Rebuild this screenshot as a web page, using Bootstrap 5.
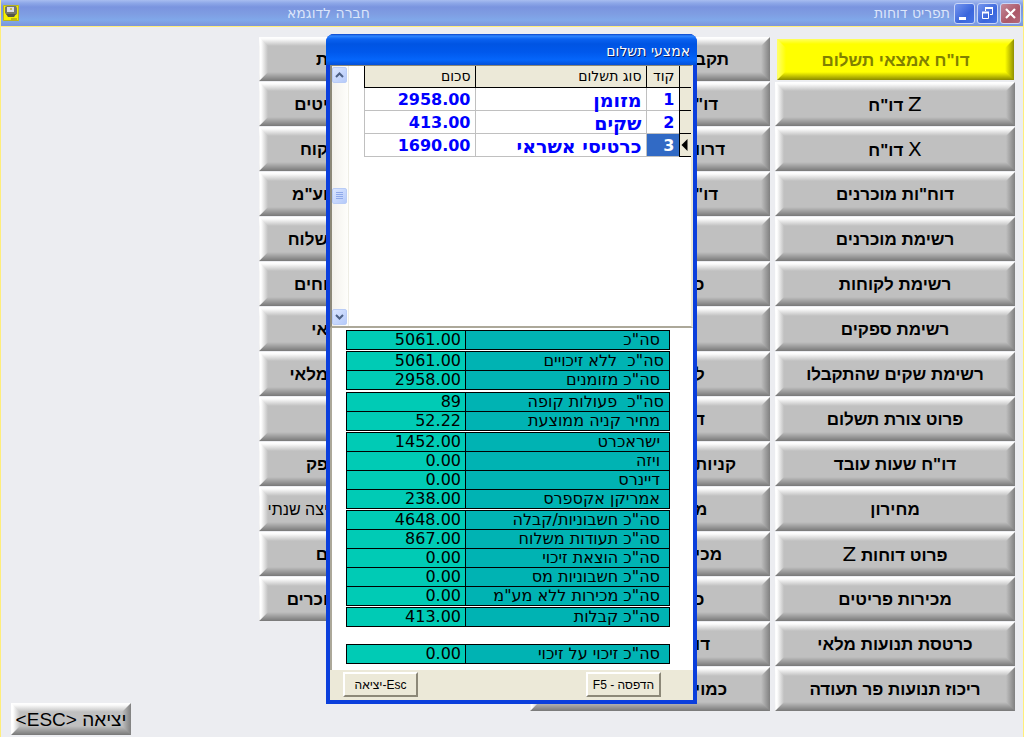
<!DOCTYPE html>
<html lang="he" dir="rtl">
<head>
<meta charset="utf-8">
<meta name="viewport" content="width=device-width, initial-scale=1">
<title>תפריט דוחות</title>
<link href="https://cdn.jsdelivr.net/npm/bootstrap@5.3.0/dist/css/bootstrap.min.css" rel="stylesheet">
<style>
  body { font-family: "DejaVu Sans", sans-serif; background: #ecedf1; color: #000; }
  .app { border-left: 1px solid #ffee7a; border-right: 1px solid #ffee7a; }
  .app-bar { height: 27px; padding: 0 2px; border-bottom: 1px solid #ffee7a; font-size: 14px; color: #dbe5fa;
    background: linear-gradient(#a8bdf0 0, #8ea8e8 3px, #7a94df 7px, #7f9de2 14px, #80a8ea 20px, #7d9fe2 23px, #7c94dc 26px); }
  .win-btns { gap: 2px; }
  .win-btn { width: 21px; height: 21px; padding: 0; border: 1px solid #c9d6f7; border-radius: 3px; background: linear-gradient(135deg, #7596ee, #3a66dc 60%, #4573e6); display: flex; }
  .win-close { background: linear-gradient(135deg, #c38a9a, #ac5868 60%, #b4687a); }
  .win-btn svg { width: 19px; height: 19px; }
  .company { margin-left: 268px; }

  .menu { padding: 10px 8px 0 10px; }
  .menu-col { flex: 0 0 23.9%; gap: 1px; }
  .near-gap { margin-right: 5px; }
  .wide-gap { margin-right: 31px; }
  .bevel { position: relative; isolation: isolate; height: 44px; border: 0; padding: 2px 4px 0; font-family: "Liberation Sans", sans-serif; font-size: 17px; font-weight: 700; line-height: 20px; color: #000; white-space: nowrap; overflow: hidden;
    background: linear-gradient(#fff 0, #fbfbfb 2px, #c0c0c0 9px, #c0c0c0 calc(100% - 9px), #787878 100%); }
  .bevel::before, .bevel::after { content: ""; position: absolute; z-index: -1; top: 0; bottom: 0; width: 9px; }
  .bevel::before { left: 0; background: linear-gradient(90deg, #fff 2px, #c0c0c0); clip-path: polygon(0 0, 100% 9px, 100% calc(100% - 9px), 0 100%); }
  .bevel::after { right: 0; background: linear-gradient(90deg, #c0c0c0, #808080); clip-path: polygon(0 9px, 100% 0, 100% 100%, 0 calc(100% - 9px)); }
  .latin { font-family: "DejaVu Sans", sans-serif; font-size: 20px; font-weight: 400; }
  .near-gap .bevel { padding-left: 165px; text-align: left; }
  .wide-gap .bevel { padding-right: 171px; text-align: right; }
  .wide-gap .bevel-thin { font-weight: 400; font-size: 16px; }
  .bevel-on { height: 41px; margin: 2px 1px 1px 2px; color: #808000; background: linear-gradient(#ffff60 0, #ff0 5px, #ff0 calc(100% - 8px), #8a8a00 100%); }
  .bevel-on::before { background: linear-gradient(90deg, #ffff70, #ff0); }
  .bevel-on::after { background: linear-gradient(90deg, #ff0, #909000); }
  .bevel-exit { width: 120px; height: 32px; margin-bottom: 2px; font-weight: 400; font-size: 19px; }

  .overlay { top: 34px; }
  .dlg { width: 371px; margin-right: 1px; border: 4px solid #0b3fdc; border-top: 0; border-radius: 8px 8px 0 0; background: #0b3fdc; }
  .dlg-title { height: 31px; padding: 4px 3px 0; margin: 0 -4px; border-radius: 8px 8px 0 0; font-size: 14px; line-height: 27px; color: #fff; text-shadow: 1px 1px #0a1f6b;
    background: linear-gradient(#0842c8 0, #2f86ff 2px, #0a62f0 5px, #0054e3 10px, #0058ec 18px, #0566fb 26px, #0450d8 31px); }
  .grid-pane { height: 263px; border-left: 2px solid #8c8878; border-top: 1px solid #8c8878; border-bottom: 2px solid #aca899; border-right: 2px solid #ece9d8; }
  .scroller { width: 17px; padding: 1px 1px 1px 0; background: linear-gradient(90deg, #f3f1ec, #fefefb); border-right: 1px solid #eeede5; }
  .sb { width: 15px; height: 16px; padding: 0; border: 1px solid #b9ccf6; border-radius: 2px; background: linear-gradient(135deg, #dbe6ff, #b5cafa); display: flex; }
  .sb svg { width: 13px; height: 14px; }

  .pay { width: 327px; table-layout: fixed; border-collapse: collapse; font-size: 16px; font-weight: 700; line-height: 20px; color: #00f; }
  .pay th { height: 21px; padding: 0 4px; font-size: 14px; font-weight: 400; color: #000; background: #ece9d8; border: 1px solid #000; border-top: 0; }
  .pay td { height: 23px; padding: 2px 4px 0; border: 1px solid #c0c0c0; white-space: nowrap; }
  .pay td.kind { font-size: 19px; }
  .pay td.mark-cell { padding: 0 0 0 1px; background: #ece9d8; border: 1px solid #000; border-right: 0; line-height: 0; text-align: left; }
  .pay th:first-child { border-right: 0; }
  .pay td.picked { background: #316ac5; color: #fff; }

  .sums-pane { height: 342px; padding: 2px 0 0 0; border-left: 2px solid #aca899; gap: 1px; }
  .sums { width: 324px; margin-right: 9px; table-layout: fixed; border-collapse: collapse; font-size: 16px; line-height: 18px; color: #000; }
  .sums th, .sums td { height: 19px; padding: 0; border: 1px solid #000; white-space: pre; overflow: hidden; }
  .sums th { width: 204px; padding-right: 9px; font-weight: 400; background: #00b3b3; }
  .sums th.flush { padding-right: 5px; }
  .sums td { padding-right: 4px; background: #00cbb5; }
  .sums-cash { margin-bottom: 1px; }
  .sums-last { margin-top: 16px; }

  .dlg-foot { height: 30px; padding: 2px 32px 0 13px; background: #ece9d8; }
  .foot-btn { width: 75px; height: 25px; padding: 0; font-family: "Liberation Sans", sans-serif; font-size: 12px; color: #000; background: #ece9d8; border: 2px solid; border-color: #fff #8c8878 #8c8878 #fff; }
</style>
</head>
<body>
<div class="app min-vh-100 d-flex flex-column position-relative">
  <header class="app-bar d-flex align-items-center">
    <div class="win-btns d-flex align-items-center">
      <button class="win-btn win-close" aria-label="סגור"><svg viewBox="0 0 19 19"><path d="M5 5l9 9M14 5l-9 9" stroke="#fff" stroke-width="2.2"/></svg></button>
      <button class="win-btn" aria-label="שחזר"><svg viewBox="0 0 19 19" fill="none" stroke="#fff"><path d="M7.500 7V4.500h7v6H12"/><path d="M7 4h8" stroke-width="2"/><path d="M4.500 8.500h6v6h-6z"/><path d="M4 8.500h7" stroke-width="2"/></svg></button>
      <button class="win-btn" aria-label="מזער"><svg viewBox="0 0 19 19"><path d="M4 13h7v3H4z" fill="#fff"/></svg></button>
    </div>
    <div class="pe-1 flex-grow-1">תפריט דוחות</div>
    <div class="company">חברה לדוגמא</div>
    <svg width="16" height="16" viewBox="0 0 16 16"><path d="M0 0h16v16H0z" fill="#f4ee00"/><path d="M.5.5h15v15H.5z" fill="none" stroke="#b8b420"/><path d="M2 2l2-1h9l1 2v6l-2 1H4L2 8z" fill="#77776a"/><path d="M4 2h7v5H4z" fill="#dcdde4"/><path d="M7 3h2v2H7z" fill="#c9b95a"/><path d="M3 9h10l-2 3H5z" fill="#55554a"/><path d="M8 14h6" stroke="#8a8820"/></svg>
  </header>

  <main class="menu d-flex flex-grow-1">
    <div class="menu-col d-flex flex-column">
      <button class="bevel bevel-on">דו"ח אמצאי תשלום</button>
      <button class="bevel"><span class="latin">Z</span> דו"ח</button>
      <button class="bevel"><span class="latin">X</span> דו"ח</button>
      <button class="bevel">דוח"ות מוכרנים</button>
      <button class="bevel">רשימת מוכרנים</button>
      <button class="bevel">רשימת לקוחות</button>
      <button class="bevel">רשימת ספקים</button>
      <button class="bevel">רשימת שקים שהתקבלו</button>
      <button class="bevel">פרוט צורת תשלום</button>
      <button class="bevel">דו"ח שעות עובד</button>
      <button class="bevel">מחירון</button>
      <button class="bevel">פרוט דוחות <span class="latin">Z</span></button>
      <button class="bevel">מכירות פריטים</button>
      <button class="bevel">כרטסת תנועות מלאי</button>
      <button class="bevel">ריכוז תנועות פר תעודה</button>
    </div>
    <div class="menu-col near-gap d-flex flex-column">
      <button class="bevel">תקב</button>
      <button class="bevel">דו"</button>
      <button class="bevel">דרוו</button>
      <button class="bevel">דו"</button>
      <button class="bevel"></button>
      <button class="bevel">כ</button>
      <button class="bevel"></button>
      <button class="bevel">ל</button>
      <button class="bevel">ד</button>
      <button class="bevel">קניות</button>
      <button class="bevel">מ</button>
      <button class="bevel">מכי</button>
      <button class="bevel">כ</button>
      <button class="bevel">דו</button>
      <button class="bevel">כמוי</button>
    </div>
    <div class="menu-col wide-gap d-flex flex-column">
      <button class="bevel">ת</button>
      <button class="bevel">יטים</button>
      <button class="bevel">קוח</button>
      <button class="bevel">וע"מ</button>
      <button class="bevel">שלוח</button>
      <button class="bevel">וחים</button>
      <button class="bevel">אי</button>
      <button class="bevel">מלאי</button>
      <button class="bevel"></button>
      <button class="bevel">פק</button>
      <button class="bevel bevel-thin">יצה שנתי</button>
      <button class="bevel">ם</button>
      <button class="bevel">וכרים</button>
    </div>
    <div class="flex-grow-1 d-flex justify-content-end align-items-end">
      <button class="bevel bevel-exit">יציאה &lt;ESC&gt;</button>
    </div>
  </main>

  <div class="overlay position-absolute start-0 end-0 d-flex justify-content-center">
    <section class="dlg" role="dialog" aria-labelledby="dlgTitle">
      <div class="dlg-title" id="dlgTitle"><span class="px-1">אמצעי תשלום</span></div>
      <div class="grid-pane bg-white d-flex justify-content-between align-items-start">
        <table class="pay">
          <colgroup><col style="width:12px"><col style="width:33px"><col style="width:171px"><col style="width:111px"></colgroup>
          <thead><tr><th></th><th>קוד</th><th>סוג תשלום</th><th>סכום</th></tr></thead>
          <tbody>
            <tr><td class="mark-cell"></td><td>1</td><td class="kind">מזומן</td><td>2958.00</td></tr>
            <tr><td class="mark-cell"></td><td>2</td><td class="kind">שקים</td><td>413.00</td></tr>
            <tr><td class="mark-cell"><svg width="7" height="14" viewBox="0 0 7 14"><path d="M6.500 1v12L.5 7z"/></svg></td><td class="picked">3</td><td class="kind">כרטיסי אשראי</td><td>1690.00</td></tr>
          </tbody>
        </table>
        <div class="scroller h-100 d-flex flex-column justify-content-between align-items-end">
          <button class="sb" aria-label="למעלה"><svg viewBox="0 0 13 14"><path d="M3 9l3.500-3.500L10 9" fill="none" stroke="#4d6185" stroke-width="2"/></svg></button>
          <button class="sb" aria-label="גלילה"><svg viewBox="0 0 13 14"><path d="M3 3.500h7M3 5.500h7M3 7.500h7M3 9.500h7" stroke="#8fa9ea"/></svg></button>
          <button class="sb" aria-label="למטה"><svg viewBox="0 0 13 14"><path d="M3 5l3.500 3.500L10 5" fill="none" stroke="#4d6185" stroke-width="2"/></svg></button>
        </div>
      </div>
      <div class="sums-pane bg-white d-flex flex-column align-items-center">
        <table class="sums"><tr><th>סה"כ</th><td>5061.00</td></tr></table>
        <table class="sums sums-cash"><tr><th class="flush">סה"כ  ללא זיכויים</th><td>5061.00</td></tr><tr><th>סה"כ מזומנים</th><td>2958.00</td></tr></table>
        <table class="sums"><tr><th class="flush">סה"כ  פעולות קופה</th><td>89</td></tr><tr><th>מחיר קניה ממוצעת</th><td>52.22</td></tr></table>
        <table class="sums"><tr><th>ישראכרט</th><td>1452.00</td></tr><tr><th>ויזה</th><td>0.00</td></tr><tr><th>דיינרס</th><td>0.00</td></tr><tr><th>אמריקן אקספרס</th><td>238.00</td></tr></table>
        <table class="sums"><tr><th>סה"כ חשבוניות/קבלה</th><td>4648.00</td></tr><tr><th>סה"כ תעודות משלוח</th><td>867.00</td></tr><tr><th>סה"כ הוצאת זיכוי</th><td>0.00</td></tr><tr><th>סה"כ חשבוניות מס</th><td>0.00</td></tr><tr><th>סה"כ מכירות ללא מע"מ</th><td>0.00</td></tr></table>
        <table class="sums"><tr><th>סה"כ קבלות</th><td>413.00</td></tr></table>
        <table class="sums sums-last"><tr><th>סה"כ זיכוי על זיכוי</th><td>0.00</td></tr></table>
      </div>
      <div class="dlg-foot d-flex justify-content-between align-items-start">
        <button class="foot-btn">הדפסה - F5</button>
        <button class="foot-btn">Esc-יציאה</button>
      </div>
    </section>
  </div>
</div>
<script src="https://cdn.jsdelivr.net/npm/bootstrap@5.3.0/dist/js/bootstrap.bundle.min.js"></script>
</body>
</html>
